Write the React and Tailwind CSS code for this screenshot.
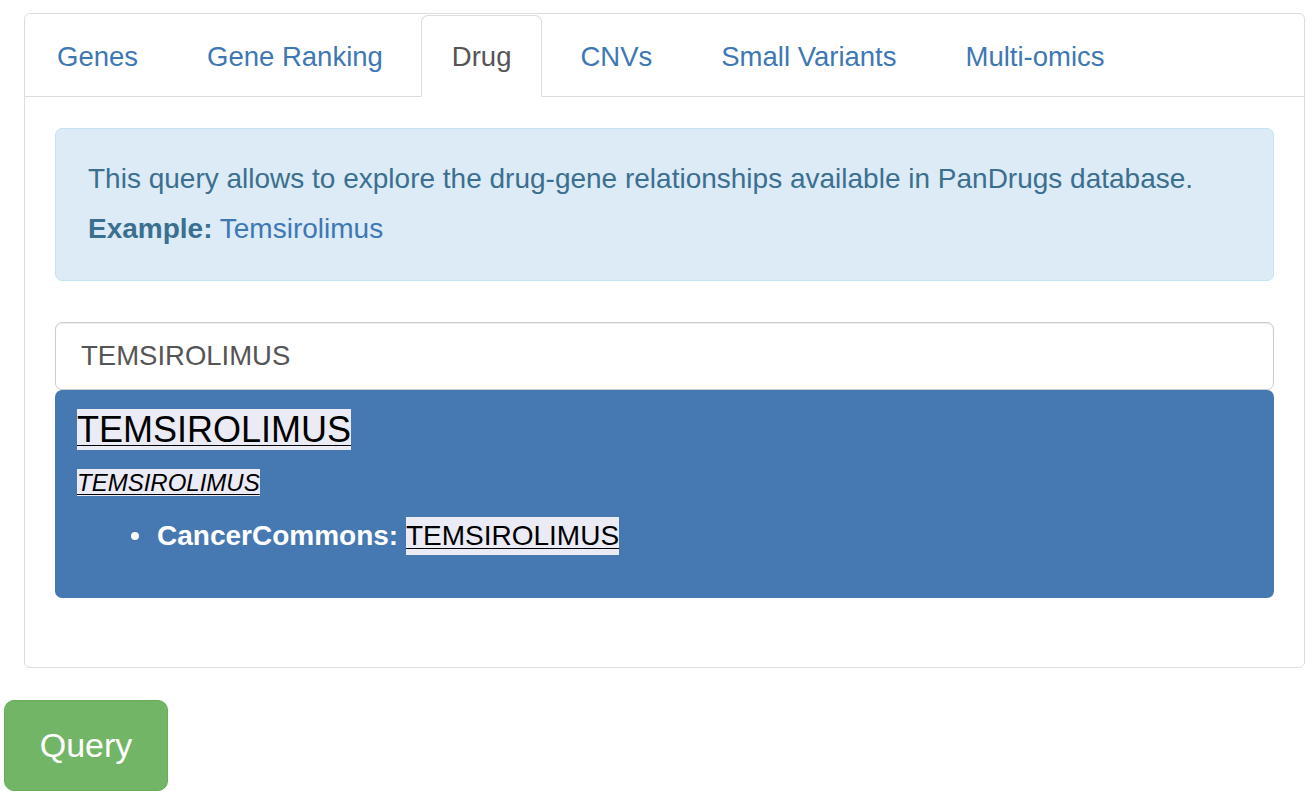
import React, { useState } from 'react';

const tabs = ['Genes', 'Gene Ranking', 'Drug', 'CNVs', 'Small Variants', 'Multi-omics'];

function Highlight({ children }) {
  return <span className="bg-[#ebebf6] text-black underline decoration-1 underline-offset-[3px]">{children}</span>;
}

export default function App() {
  const [active, setActive] = useState('Drug');
  const [query, setQuery] = useState('TEMSIROLIMUS');

  return (
    <div className="min-h-screen bg-white pl-[4px] pt-[13px] font-['Liberation_Sans',Arial,sans-serif] text-[28px] text-[#333]">
      {/* Tabbed panel */}
      <div className="ml-[20px] w-[1281px] rounded-[6px] border border-[#dddddd] bg-white">
        <ul className="flex gap-[7px] border-b border-[#dddddd] pl-[1px] pt-[1px] text-[27.5px]">
          {tabs.map(tab => (
            <li key={tab} className="-mb-px">
              <button
                type="button"
                onClick={() => setActive(tab)}
                className={
                  tab === active
                    ? 'h-[82px] rounded-t-[7px] border border-[#dddddd] border-b-transparent bg-white px-[30px] pt-[2px] leading-[78px] text-[#555555]'
                    : 'h-[82px] rounded-t-[7px] border border-transparent px-[30px] pt-[2px] leading-[78px] text-[#3d78b4]'
                }
              >
                {tab}
              </button>
            </li>
          ))}
        </ul>

        <div className="px-[30px] pb-[69px] pt-[31px]">
          {/* Info box */}
          <div className="rounded-[7px] border border-[#c4e3f0] bg-[#dcebf6] px-[32px] pb-[32px] pt-[31px] text-[#3b6f90]">
            <p className="mb-[12px] leading-[38px]">
              This query allows to explore the drug-gene relationships available in PanDrugs database.
            </p>
            <p className="leading-[38px]">
              <b>Example:</b> <a href="#" className="text-[#3d78b4]">Temsirolimus</a>
            </p>
          </div>

          {/* Search input */}
          <input
            value={query}
            onChange={e => setQuery(e.target.value)}
            className="mt-[41px] block h-[68px] w-full rounded-[7px] border border-[#cccccc] px-[25px] text-[27.5px] text-[#555555] shadow-[inset_0_1px_1px_rgba(0,0,0,0.075)] outline-none"
          />

          {/* Suggestion result */}
          <div className="rounded-[7px] bg-[#4679b2] px-[22px] pb-[43px] pt-[16px]">
            <div className="text-[36px] font-medium leading-[48px]">
              <Highlight>TEMSIROLIMUS</Highlight>
            </div>
            <div className="mt-[14px] text-[24px] font-medium italic leading-[30px]">
              <Highlight>TEMSIROLIMUS</Highlight>
            </div>
            <ul className="mt-[19px] pl-[54px] leading-[38px] text-white">
              <li className="flex items-center">
                <span className="mr-[18px] h-[8px] w-[8px] rounded-full bg-white" />
                <b>CancerCommons:</b>&nbsp;<Highlight>TEMSIROLIMUS</Highlight>
              </li>
            </ul>
          </div>
        </div>
      </div>

      <button
        type="button"
        className="mt-[32px] h-[91px] w-[164px] rounded-[10px] border border-[#66ad58] bg-[#73b566] text-[34px] text-white"
      >
        Query
      </button>
    </div>
  );
}
